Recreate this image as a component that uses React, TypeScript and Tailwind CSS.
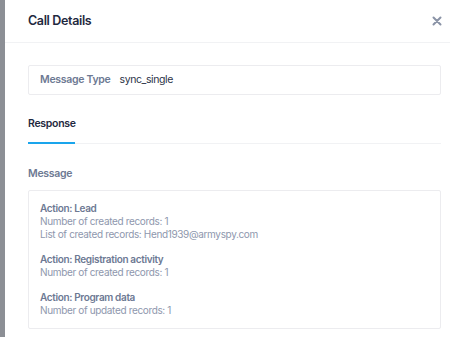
import React from "react";

export default function App() {
  const font = { fontFamily: "Inter, 'Noto Sans', sans-serif" };
  return (
    <div className="flex h-[337px] w-[450px] overflow-hidden bg-white" style={font}>
      <div className="w-[5px] shrink-0 bg-[#8c8f95]" />
      <div className="flex min-w-0 flex-1 flex-col">
        <div className="flex h-[43px] shrink-0 items-center justify-between border-b border-[#f1f2f4] pl-[23px] pr-[8px]">
          <span className="text-[12.5px] font-semibold tracking-[-0.35px] text-[#1f2940]">Call Details</span>
          <svg width="10" height="10" viewBox="0 0 10 10">
            <path d="M1.5 1.5 L8.5 8.5 M8.5 1.5 L1.5 8.5" stroke="#8a93a6" strokeWidth="2" strokeLinecap="round" />
          </svg>
        </div>
        <div className="flex flex-col pl-[23px] pr-[9px] pt-[22px]">
          <div className="flex h-[30px] items-center gap-[9px] rounded-[2px] border border-[#ececef] px-[11px] text-[10.5px] tracking-[-0.3px]">
            <span className="font-semibold text-[#6d7993]">Message Type</span>
            <span className="tracking-[-0.4px] text-[#2b3347]">sync_single</span>
          </div>
          <div className="mt-[17px] flex border-b border-[#f1f2f4]">
            <div className="flex h-[31px] flex-col justify-between">
              <span className="pt-[5px] text-[10.5px] font-semibold leading-[14px] tracking-[-0.3px] text-[#1f2940]">Response</span>
              <div className="mb-[-1px] h-[2px] w-[47px] bg-[#1aa5ec]" />
            </div>
          </div>
          <div className="mt-[23px] text-[10.5px] font-semibold leading-[14px] tracking-[-0.3px] text-[#6d7993]">Message</div>
          <div className="mt-[9px] flex h-[139px] flex-col gap-[12px] rounded-[2px] border border-[#ececef] px-[11px] pt-[11px] text-[10px] leading-[13px] tracking-[-0.35px]">
            <div className="flex flex-col">
              <span className="font-semibold text-[#6d7993]">Action: Lead</span>
              <span className="text-[#8e97ad]">Number of created records: 1</span>
              <span className="text-[#8e97ad]">List of created records: Hend1939@armyspy.com</span>
            </div>
            <div className="flex flex-col">
              <span className="font-semibold text-[#6d7993]">Action: Registration activity</span>
              <span className="text-[#8e97ad]">Number of created records: 1</span>
            </div>
            <div className="flex flex-col">
              <span className="font-semibold text-[#6d7993]">Action: Program data</span>
              <span className="text-[#8e97ad]">Number of updated records: 1</span>
            </div>
          </div>
        </div>
      </div>
    </div>
  );
}
